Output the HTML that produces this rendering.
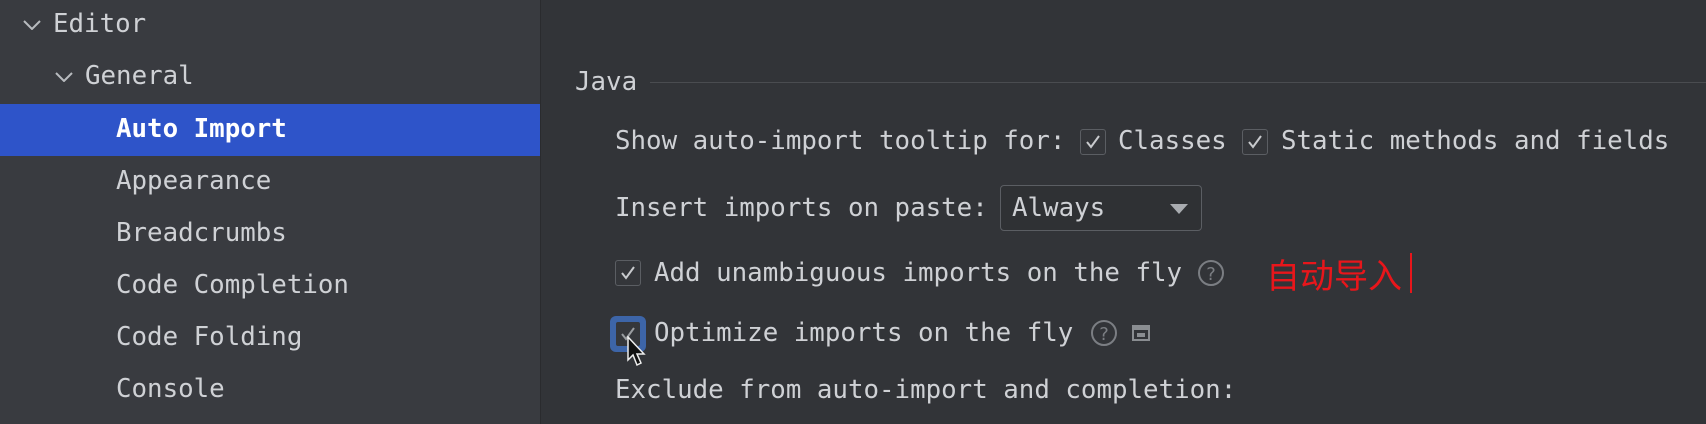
<!DOCTYPE html>
<html><head><meta charset="utf-8"><style>
body{margin:0;width:1706px;height:424px;overflow:hidden;background:#2b2d30;font-family:"DejaVu Sans Mono","Liberation Mono",monospace;font-size:25.8px;color:#cfd1d5}
#side{position:absolute;left:0;top:0;width:540px;height:424px;background:#393b40;border-right:1px solid #2a2b2e}
#main{position:absolute;left:541px;top:0;right:0;height:424px;background:#323438}
.t{position:absolute;white-space:pre;line-height:30px;transform:translateY(-15px)}
.sel{position:absolute;left:0;top:104px;width:540px;height:52px;background:#2e54c9}
.cb{position:absolute;width:24px;height:24px;border:1px solid #5b5e63;border-radius:3px;box-sizing:border-box;background:#34363a}
.cb svg{position:absolute;left:3px;top:3px}
</style></head><body>
<div id="side">
<svg style="position:absolute;left:23px;top:20px" width="18" height="10"><path d="M1 1 L9 9 L17 1" fill="none" stroke="#b8bbbf" stroke-width="2"/></svg>
<div class="t" style="left:53px;top:24px">Editor</div>
<svg style="position:absolute;left:55px;top:72px" width="18" height="10"><path d="M1 1 L9 9 L17 1" fill="none" stroke="#b8bbbf" stroke-width="2"/></svg>
<div class="t" style="left:85px;top:76px">General</div>
<div class="sel"></div>
<div class="t" style="left:116px;top:129px;color:#fff;font-weight:bold">Auto Import</div>
<div class="t" style="left:116px;top:181px">Appearance</div>
<div class="t" style="left:116px;top:233px">Breadcrumbs</div>
<div class="t" style="left:116px;top:285px">Code Completion</div>
<div class="t" style="left:116px;top:337px">Code Folding</div>
<div class="t" style="left:116px;top:389px">Console</div>
</div>
<div id="main"></div>
<div class="t" style="left:575px;top:82px">Java</div>
<div style="position:absolute;left:650px;top:82px;right:0;height:1px;background:#4a4c50"></div>

<div class="t" style="left:615px;top:141px">Show auto-import tooltip for:</div>
<div class="cb" style="left:1080px;top:129px;width:26px;height:26px"><svg width="18" height="18"><path d="M3 9 L7 14 L15 3" fill="none" stroke="#c8cacd" stroke-width="2"/></svg></div>
<div class="t" style="left:1118px;top:141px">Classes</div>
<div class="cb" style="left:1242px;top:129px;width:26px;height:26px"><svg width="18" height="18"><path d="M3 9 L7 14 L15 3" fill="none" stroke="#c8cacd" stroke-width="2"/></svg></div>
<div class="t" style="left:1281px;top:141px">Static methods and fields</div>

<div class="t" style="left:615px;top:208px">Insert imports on paste:</div>
<div style="position:absolute;left:1000px;top:185px;width:202px;height:46px;border:1.5px solid #5b5e63;border-radius:4px;box-sizing:border-box;background:#2f3134"></div>
<div class="t" style="left:1012px;top:208px">Always</div>
<svg style="position:absolute;left:1170px;top:204px" width="18" height="10"><path d="M0 0 L18 0 L9 10Z" fill="#a9acb0"/></svg>

<div class="cb" style="left:615px;top:260px;width:26px;height:26px"><svg width="18" height="18"><path d="M3 9 L7 14 L15 3" fill="none" stroke="#c8cacd" stroke-width="2"/></svg></div>
<div class="t" style="left:654px;top:273px">Add unambiguous imports on the fly</div>
<svg style="position:absolute;left:1197px;top:259px" width="28" height="28"><circle cx="14" cy="14" r="12" fill="none" stroke="#7b7e83" stroke-width="2"/><text x="14" y="21" font-size="18" text-anchor="middle" fill="#7b7e83" font-family="DejaVu Sans">?</text></svg>
<div class="t" style="left:1266px;top:274px;font-family:'Noto Sans CJK SC',sans-serif;font-size:34px;color:#e8161b;line-height:40px;transform:translateY(-20px)">自动导入</div>
<div style="position:absolute;left:1410px;top:253px;width:2px;height:40px;background:#e8161b"></div>

<div style="position:absolute;left:610px;top:316px;width:36px;height:36px;border-radius:6px;background:#3d65a8"></div>
<div class="cb" style="left:615px;top:321px;width:26px;height:26px;border-color:#3d65a8;background:#35373b"><svg width="18" height="18"><path d="M3 9 L7 14 L15 3" fill="none" stroke="#9a9da1" stroke-width="2"/></svg></div>
<svg style="position:absolute;left:626px;top:336px" width="22" height="32"><path d="M2 1 L2 24 L7 19 L11 29 L15 27 L11 18 L18 18Z" fill="#111" stroke="#eee" stroke-width="1.5"/></svg>
<div class="t" style="left:654px;top:333px">Optimize imports on the fly</div>
<svg style="position:absolute;left:1090px;top:319px" width="28" height="28"><circle cx="14" cy="14" r="12" fill="none" stroke="#7b7e83" stroke-width="2"/><text x="14" y="21" font-size="18" text-anchor="middle" fill="#7b7e83" font-family="DejaVu Sans">?</text></svg>
<svg style="position:absolute;left:1132px;top:325px" width="18" height="16"><rect x="1" y="1" width="16" height="14" fill="none" stroke="#8a8d91" stroke-width="2"/><rect x="1" y="1" width="16" height="4" fill="#8a8d91"/><rect x="5" y="8" width="8" height="4" fill="#8a8d91"/></svg>

<div class="t" style="left:615px;top:390px">Exclude from auto-import and completion:</div>
</body></html>
